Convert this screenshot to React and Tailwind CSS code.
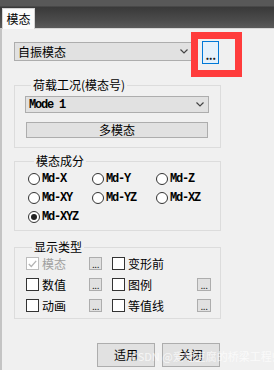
import React from 'react';

const mono = "font-['Liberation_Mono',monospace] font-bold text-[12px] tracking-[-1.2px] leading-[12px] text-black";

const Chevron = () => (
  <svg width="8" height="5" viewBox="0 0 8 5" className="shrink-0">
    <path d="M0.5 0.5 L4 4 L7.5 0.5" fill="none" stroke="#444" strokeWidth="1.2" />
  </svg>
);

const Radio = ({ label, checked }) => (
  <div className="flex items-center h-[12px]">
    <span className="w-[12px] h-[12px] rounded-full border border-[#333] bg-white flex items-center justify-center shrink-0">
      {checked && <span className="w-[6px] h-[6px] rounded-full bg-[#222]" />}
    </span>
    <span className={`ml-[2px] ${mono}`}>{label}</span>
  </div>
);

const Check = ({ checked, disabled }) => (
  <span
    className={`w-[13px] h-[13px] border bg-white flex items-center justify-center shrink-0 ${
      disabled ? 'border-[#bcbcbc]' : 'border-[#333]'
    }`}
  >
    {checked && (
      <svg width="9" height="8" viewBox="0 0 9 8">
        <path d="M0.8 4 L3.3 6.5 L8.2 0.8" fill="none" stroke={disabled ? '#b4b4b4' : '#333'} strokeWidth="1.3" />
      </svg>
    )}
  </span>
);

const Dots = ({ w = 'w-[13px]' }) => (
  <span className={`${w} h-[13px] border border-[#adadad] bg-[#e1e1e1] flex items-end justify-center shrink-0`}>
    <span className="text-[10px] leading-[10px] text-[#222] tracking-[-0.5px]">...</span>
  </span>
);

const Legend = ({ children }) => (
  <legend className="ml-[6px] px-[2px] text-[12px] leading-[14px] text-black">{children}</legend>
);

export default function App() {
  return (
    <div className="w-[274px] h-[370px] relative overflow-hidden bg-[#f0f0f0] font-['Noto_Sans_CJK_SC',sans-serif]">
      {/* tab strip */}
      <div className="h-[28px] flex items-end pl-[2px] bg-[linear-gradient(#585858_0px,#585858_6px,#393939_7px,#4b4b4b_20px,#5a5a5a_28px)]">
        <div className="relative z-10 mb-[-1px] w-[33px] h-[21px] bg-[#fbfbfb] border border-b-0 border-[#d4d4d4] flex items-center justify-center text-[12px] text-black">
          模态
        </div>
      </div>

      <div className="border-t border-l-2 border-[#d6d6d6] border-l-[#c4c4c4] h-[342px] pl-[12px]">
        {/* top combo + more button */}
        <div className="flex items-start mt-[12px]">
          <div className="mt-[1px] w-[178px] h-[19px] border border-[#adadad] bg-[#e1e1e1] flex items-center justify-between pl-[3px] pr-[3px]">
            <span className="text-[12px] leading-[14px] text-black">自振模态</span>
            <Chevron />
          </div>
          <div className="ml-[10px] w-[17px] h-[23px] border border-[#0078d7] bg-[#e5f1fb] flex items-end justify-center pb-[4px]">
            <span className="text-[12px] leading-[8px] font-bold text-[#1a1a1a] tracking-[-0.5px]">...</span>
          </div>
        </div>

        {/* 荷载工况 */}
        <fieldset className="mt-[14px] w-[207px] border border-[#dcdcdc] pl-[10px] pt-[4px] pb-[9px]">
          <Legend>荷载工况(模态号)</Legend>
          <div className="w-[184px] h-[17px] border border-[#adadad] bg-[#e1e1e1] flex items-center justify-between pl-[3px] pr-[4px]">
            <span className={mono}>Mode 1</span>
            <Chevron />
          </div>
          <div className="mt-[9px] ml-[1px] w-[182px] h-[16px] border border-[#adadad] bg-[#e1e1e1] flex items-center justify-center text-[12px] text-black">
            多模态
          </div>
        </fieldset>

        {/* 模态成分 */}
        <fieldset className="mt-[6px] w-[207px] border border-[#dcdcdc] pl-[13px] pt-[5px] pb-[7px]">
          <Legend>模态成分</Legend>
          <div className="grid grid-cols-[64px_64px_64px] gap-y-[7px]">
            <Radio label="Md-X" />
            <Radio label="Md-Y" />
            <Radio label="Md-Z" />
            <Radio label="Md-XY" />
            <Radio label="Md-YZ" />
            <Radio label="Md-XZ" />
            <Radio label="Md-XYZ" checked />
          </div>
        </fieldset>

        {/* 显示类型 */}
        <fieldset className="mt-[9px] w-[207px] border border-[#dcdcdc] pl-[11px] pt-[3px] pb-[6px]">
          <Legend>显示类型</Legend>
          <div className="flex flex-col gap-y-[8px] text-[12px] leading-[13px]">
            <div className="flex items-center h-[13px]">
              <Check checked disabled />
              <span className="ml-[3px] w-[47px] text-[#a0a0a0]">模态</span>
              <Dots />
              <span className="ml-[10px]"><Check /></span>
              <span className="ml-[3px] text-black">变形前</span>
            </div>
            <div className="flex items-center h-[13px]">
              <Check />
              <span className="ml-[3px] w-[47px] text-black">数值</span>
              <Dots />
              <span className="ml-[10px]"><Check /></span>
              <span className="ml-[3px] w-[69px] text-black">图例</span>
              <Dots w="w-[14px]" />
            </div>
            <div className="flex items-center h-[13px]">
              <Check />
              <span className="ml-[3px] w-[47px] text-black">动画</span>
              <Dots />
              <span className="ml-[10px]"><Check /></span>
              <span className="ml-[3px] w-[69px] text-black">等值线</span>
              <Dots w="w-[14px]" />
            </div>
          </div>
        </fieldset>

        {/* buttons */}
        <div className="flex mt-[24px] pl-[83px] gap-[7px]">
          <div className="w-[58px] h-[24px] border border-[#adadad] bg-[#e1e1e1] flex items-center justify-center text-[12px] text-black">适用</div>
          <div className="w-[58px] h-[24px] border border-[#adadad] bg-[#e1e1e1] flex items-center justify-center text-[12px] text-black">关闭</div>
        </div>
      </div>

      {/* annotation box */}
      <div className="absolute left-[191px] top-[32px] w-[51px] h-[45px] border-[7px] border-[#ff3c3c]" />

      {/* watermark */}
      <div className="absolute left-[131px] top-[349px] text-[11px] leading-[14px] text-white/70 whitespace-nowrap">
        CSDN @爱吃豆腐的桥梁工程师
      </div>
    </div>
  );
}
